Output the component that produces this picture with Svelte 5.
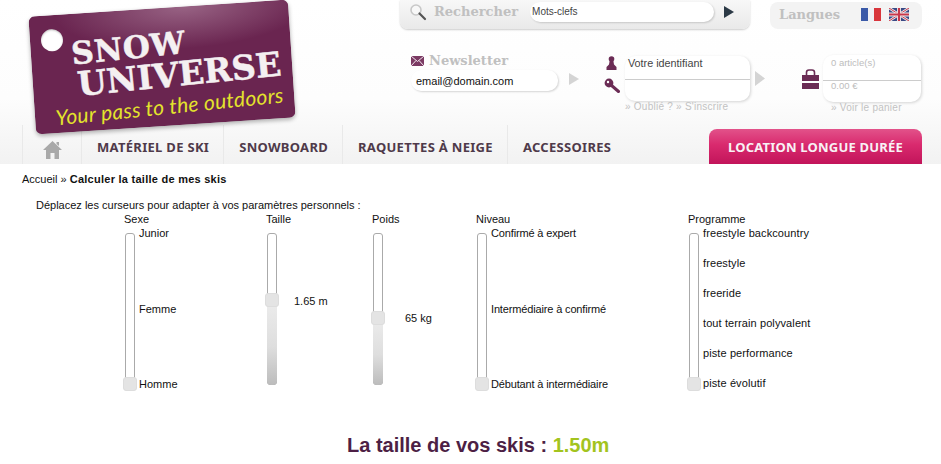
<script>
  const sliders = [
    { title: 'Sexe', width: 142, pos: 150, labels: ['Junior', 'Femme', 'Homme'], cls: 'three' },
    { title: 'Taille', width: 106, pos: 66, fill: true, value: '1.65 m', vtop: 68, vleft: 17 },
    { title: 'Poids', width: 104, pos: 84, fill: true, value: '65 kg', vtop: 85, vleft: 22 },
    { title: 'Niveau', width: 212, pos: 150, labels: ['Confirmé à expert', 'Intermédiaire à confirmé', 'Débutant à intermédiaire'], cls: 'three tight' },
    { title: 'Programme', width: 200, pos: 150, labels: ['freestyle backcountry', 'freestyle', 'freeride', 'tout terrain polyvalent', 'piste performance', 'piste évolutif'], cls: 'six' }
  ];
  const nav = ['MATÉRIEL DE SKI', 'SNOWBOARD', 'RAQUETTES À NEIGE', 'ACCESSOIRES'];
</script>

<div class="page">
  <header class="header">
    <div class="logo">
      <span class="hole"></span>
      <div class="brand">
        <div class="snow">SNOW</div>
        <div class="universe">UNIVERSE</div>
        <div class="tagline">Your pass to the outdoors</div>
      </div>
    </div>

    <div class="top">
      <div class="search">
        <svg class="magnifier" width="18" height="18" viewBox="0 0 18 18">
          <circle cx="7" cy="7" r="5" fill="#f8f8f8" stroke="#c8c8c8" stroke-width="1.6" />
          <path d="M10.5 10.5 L16 16" stroke="#555" stroke-width="2.2" stroke-linecap="round" />
        </svg>
        <span class="serif-title">Rechercher</span>
        <div class="pill search-input">Mots-clefs</div>
        <svg class="go" width="10" height="12" viewBox="0 0 10 12"><path d="M0 0 L10 6 L0 12Z" fill="#2c3a46" /></svg>
      </div>
      <div class="langs">
        <span class="serif-title">Langues</span>
        <svg class="flag fr" width="20" height="13" viewBox="0 0 20 13">
          <rect width="7" height="13" fill="#3b5aa8" /><rect x="7" width="6" height="13" fill="#f0f0f4" /><rect x="13" width="7" height="13" fill="#d8353c" />
        </svg>
        <svg class="flag" width="20" height="13" viewBox="0 0 20 13">
          <rect width="20" height="13" fill="#3a4a86" />
          <path d="M0 0 L20 13 M20 0 L0 13" stroke="#eee" stroke-width="2.6" />
          <path d="M0 0 L20 13 M20 0 L0 13" stroke="#c9384a" stroke-width="1" />
          <path d="M10 0 V13 M0 6.5 H20" stroke="#eee" stroke-width="4" />
          <path d="M10 0 V13 M0 6.5 H20" stroke="#c9384a" stroke-width="2.2" />
        </svg>
      </div>
    </div>

    <div class="tools">
      <div class="newsletter">
        <div class="news-title">
          <svg width="13" height="10" viewBox="0 0 13 10">
            <rect width="13" height="10" fill="#7b3a63" /><path d="M0 0 L6.5 5.5 L13 0 M0 10 L5 4.5 M13 10 L8 4.5" stroke="#f3e7ef" stroke-width="1" fill="none" />
          </svg>
          <span class="serif-title">Newsletter</span>
        </div>
        <div class="pill news-input">email@domain.com</div>
      </div>
      <svg class="arrow news-arrow" width="10" height="12" viewBox="0 0 10 12"><path d="M0 0 L10 6 L0 12Z" fill="#d4d4d4" /></svg>

      <div class="login">
        <div class="login-row">
          <div class="login-icons">
            <svg width="11" height="14" viewBox="0 0 11 14">
              <circle cx="5.5" cy="3" r="2.8" fill="#6b2c55" /><path d="M3.6 5 H7.4 L8 8.5 L10.5 11 V14 H0.5 V11 L3 8.5Z" fill="#6b2c55" />
            </svg>
            <svg width="16" height="15" viewBox="0 0 16 15">
              <circle cx="5" cy="5" r="4.4" fill="#6b2c55" /><circle cx="4" cy="4" r="1.2" fill="#fff" />
              <path d="M7 7 L14.5 13.5" stroke="#6b2c55" stroke-width="3" stroke-linecap="round" />
            </svg>
          </div>
          <div class="split-box login-box">
            <div class="cell login-cell">Votre identifiant</div>
            <div class="cell"></div>
          </div>
          <svg class="arrow" width="10" height="15" viewBox="0 0 10 15"><path d="M0 0 L10 7.5 L0 15Z" fill="#d4d4d4" /></svg>
        </div>
        <div class="muted-link login-links">» Oublié ? » S'inscrire</div>
      </div>

      <div class="cart">
        <div class="cart-row">
          <svg class="bag" width="17" height="20" viewBox="0 0 17 20">
            <path d="M4.5 6 V3.5 Q4.5 1 7 1 H10 Q12.5 1 12.5 3.5 V6" fill="none" stroke="#6b2c55" stroke-width="1.6" />
            <path d="M0 6 H17 V12 H0Z M0 14 H17 V20 H0Z" fill="#6b2c55" />
          </svg>
          <div class="split-box cart-box">
            <div class="cell cart-cell">0 article(s)</div>
            <div class="cell cart-cell">0.00 €</div>
          </div>
        </div>
        <div class="muted-link cart-link">» Voir le panier</div>
      </div>
    </div>

    <nav class="nav">
      <a class="home" href="#home" aria-label="Accueil">
        <svg width="19" height="18" viewBox="0 0 19 18">
          <path d="M9.5 0 L19 9 H16 V18 H11.5 V12 H7.5 V18 H3 V9 H0Z" fill="#a9a9a9" />
          <path d="M13.5 1 H16 V5 L13.5 3Z" fill="#a9a9a9" />
        </svg>
      </a>
      {#each nav as item, i}
        <a class="nav-item" class:last={i === nav.length - 1} href="#item">{item}</a>
      {/each}
      <a class="cta" href="#cta">LOCATION LONGUE DURÉE</a>
    </nav>
  </header>

  <main class="content">
    <p class="crumb">Accueil » <b>Calculer la taille de mes skis</b></p>
    <p class="intro">Déplacez les curseurs pour adapter à vos paramètres personnels :</p>

    <div class="sliders">
      {#each sliders as s}
        <div class="col" style="width:{s.width}px">
          <div class="col-title">{s.title}</div>
          <div class="col-body">
            <div class="track">
              {#if s.fill}<span class="fill" style="top:{s.pos}px"></span>{/if}
              <span class="handle" style="top:{s.pos}px"></span>
            </div>
            {#if s.labels}
              <div class="labels {s.cls}">
                {#each s.labels as l}<span>{l}</span>{/each}
              </div>
            {:else}
              <span class="value" style="margin-top:{s.vtop}px;margin-left:{s.vleft}px">{s.value}</span>
            {/if}
          </div>
        </div>
      {/each}
    </div>

    <h2 class="result">La taille de vos skis : <span>1.50m</span></h2>
  </main>
</div>

<style>
  :global(body) {
    margin: 0;
    background: #fff;
    font-family: "Liberation Sans", Arial, sans-serif;
    font-size: 11px;
    color: #111;
  }
  .page {
    width: 941px;
    height: 464px;
    overflow: hidden;
  }
  .header {
    position: relative;
    height: 164px;
    box-sizing: border-box;
    background: linear-gradient(to bottom, #fff 0, #fdfdfd 60%, #f2f2f2 100%);
    display: flex;
    flex-direction: column;
  }
  .logo {
    position: absolute;
    left: 32px;
    top: 8px;
    width: 260px;
    height: 118px;
    border-radius: 6px;
    transform: rotate(-3.8deg);
    background:
      radial-gradient(ellipse 130px 42px at 60% 0, rgba(190, 150, 175, .55), rgba(190, 150, 175, 0) 100%),
      #6a2550;
    box-shadow: 0 2px 4px rgba(0, 0, 0, .3);
    z-index: 2;
  }
  .hole {
    position: absolute;
    left: 11px;
    top: 14px;
    width: 22px;
    height: 22px;
    border-radius: 50%;
    background: #fff;
    box-shadow: inset 0 1px 2px rgba(0, 0, 0, .25);
  }
  .brand {
    padding: 26px 0 0 41px;
    transform: rotate(-2deg);
    transform-origin: 0 50%;
  }
  .snow, .universe {
    font-family: "DejaVu Serif", serif;
    font-weight: 700;
    color: #f4f0f1;
    white-space: nowrap;
    line-height: 1;
    -webkit-text-stroke: 0.5px #f4f0f1;
  }
  .snow {
    font-size: 31px;
    letter-spacing: 0.5px;
  }
  .universe {
    font-size: 33.5px;
    margin-left: 3px;
    margin-top: -1px;
  }
  .tagline {
    font-family: "Lato", sans-serif;
    font-style: italic;
    font-size: 21px;
    line-height: 1;
    letter-spacing: 0.3px;
    color: #e3e32c;
    white-space: nowrap;
    margin: 2px 0 0 -22px;
  }
  .top {
    height: 29px;
    display: flex;
    padding-left: 400px;
  }
  .search {
    width: 350px;
    height: 29px;
    box-sizing: border-box;
    display: flex;
    align-items: center;
    padding: 0 0 6px 9px;
    border-radius: 0 0 8px 8px;
    background: linear-gradient(to bottom, #f8f8f8, #e9e9e9);
    box-shadow: 0 1px 2px rgba(0, 0, 0, .2);
  }
  .magnifier {
    margin-right: 7px;
  }
  .serif-title {
    font-family: "DejaVu Serif", serif;
    font-weight: 700;
    font-size: 13px;
    color: #c0c0c0;
  }
  .pill {
    background: #fff;
    border-radius: 10px;
    box-shadow: 1px 1px 2px rgba(0, 0, 0, .16);
    display: flex;
    align-items: center;
    box-sizing: border-box;
  }
  .search-input {
    width: 184px;
    height: 20px;
    margin-left: 12px;
    padding-left: 2px;
    font-size: 10px;
    color: #444;
  }
  .go {
    margin-left: 10px;
  }
  .langs {
    width: 152px;
    height: 27px;
    margin: 2px 0 0 20px;
    box-sizing: border-box;
    background: #f3f3f3;
    border-radius: 8px;
    display: flex;
    align-items: center;
    padding: 0 0 2px 9px;
  }
  .flag {
    margin-left: 8px;
  }
  .flag.fr {
    margin-left: 21px;
  }
  .tools {
    height: 96px;
    position: relative;
    display: flex;
    padding-left: 411px;
    box-sizing: border-box;
  }
  .newsletter {
    width: 147px;
    padding-top: 22px;
  }
  .news-title {
    display: flex;
    align-items: center;
    gap: 5px;
    height: 19px;
  }
  .news-input {
    height: 21px;
    padding-left: 5px;
    font-size: 11px;
    color: #111;
  }
  .arrow {
    flex: none;
  }
  .news-arrow {
    margin: 44px 0 0 11px;
  }
  .login {
    margin-left: 24px;
    padding-top: 27px;
    width: 164px;
    flex: none;
  }
  .login-row {
    display: flex;
    align-items: center;
  }
  .login-icons {
    width: 22px;
    height: 37px;
    align-self: flex-start;
    display: flex;
    flex-direction: column;
    justify-content: space-between;
    align-items: center;
    padding-right: 5px;
    box-sizing: border-box;
  }
  .split-box {
    background: #fff;
    border-radius: 10px;
    box-shadow: 1px 1px 3px rgba(0, 0, 0, .16);
    display: flex;
    flex-direction: column;
    flex: none;
  }
  .login-box {
    width: 125px;
    height: 45px;
    margin-right: 5px;
  }
  .cell {
    flex: 1;
    padding-left: 3px;
    display: flex;
    align-items: center;
    color: #444;
    font-size: 10.8px;
  }
  .cell:first-child {
    border-bottom: 1px solid #ccc;
  }
  .login-cell {
    align-items: flex-start;
    padding-top: 1px;
  }
  .muted-link {
    color: #c2c2c2;
    font-size: 10px;
    letter-spacing: 0.25px;
  }
  .login-links {
    margin: 0 0 0 22px;
    line-height: 12px;
  }
  .cart {
    margin-left: 35px;
    padding-top: 26px;
  }
  .cart-row {
    display: flex;
    align-items: center;
  }
  .bag {
    margin-right: 4px;
    flex: none;
  }
  .cart-box {
    width: 98px;
    height: 47px;
  }
  .cart-cell {
    color: #bdbdbd;
    font-size: 9.5px;
    padding-left: 8px;
    align-items: flex-start;
    line-height: 10px;
  }
  .cart-cell:first-child {
    padding-top: 3px;
  }
  .cart-link {
    margin-left: 29px;
    line-height: 12px;
  }
  .nav {
    height: 39px;
    margin-left: 22px;
    display: flex;
    align-items: stretch;
    position: relative;
  }
  .home {
    width: 60px;
    border-left: 1px solid #e9e9e9;
    border-right: 1px solid #e9e9e9;
    box-sizing: border-box;
    display: flex;
    align-items: center;
    justify-content: center;
    padding: 10px 0 0 0;
  }
  .nav-item {
    display: flex;
    align-items: center;
    padding: 5px 14px 0 15px;
    border-right: 1px solid #e9e9e9;
    text-decoration: none;
    color: #4f3a4a;
    font-family: "Noto Sans", sans-serif;
    font-weight: 700;
    font-size: 13px;
    letter-spacing: 0.3px;
    white-space: nowrap;
  }
  .nav-item.last {
    border-right: 0;
  }
  .cta {
    margin: 4px 19px 0 auto;
    width: 213px;
    display: flex;
    align-items: center;
    justify-content: center;
    border-radius: 8px 8px 0 0;
    background: linear-gradient(to bottom, #e2528a 0, #d92a6e 45%, #c2145a 100%);
    color: #f8f2f5;
    font-family: "Noto Sans", sans-serif;
    font-weight: 700;
    font-size: 13px;
    letter-spacing: 0.2px;
    text-decoration: none;
    white-space: nowrap;
  }
  .content {
    padding-top: 9px;
  }
  .crumb {
    margin: 0 0 0 22px;
    line-height: 13px;
  }
  .crumb b {
    letter-spacing: 0.26px;
  }
  .intro {
    margin: 13px 0 0 36px;
    line-height: 13px;
  }
  .sliders {
    display: flex;
    margin: 1px 0 0 124px;
  }
  .col {
    flex: none;
  }
  .col-title {
    height: 13px;
    line-height: 13px;
  }
  .col-body {
    display: flex;
    height: 153px;
    margin-top: 7px;
  }
  .track {
    position: relative;
    width: 10px;
    height: 152px;
    box-sizing: border-box;
    margin-left: 1px;
    border: 1px solid #aaa;
    border-radius: 3px;
    background: #fff;
    flex: none;
  }
  .fill {
    position: absolute;
    left: -1px;
    right: -1px;
    bottom: -1px;
    border-radius: 0 0 4px 4px;
    background: linear-gradient(to bottom, #ececec 0, #dedede 55%, #bcbcbc 100%);
  }
  .handle {
    position: absolute;
    left: -3px;
    width: 14px;
    height: 14px;
    border-radius: 3px;
    background: #e4e4e4;
    border: 1px solid #ddd;
    box-sizing: border-box;
    transform: translateY(-7px);
  }
  .labels {
    display: flex;
    flex-direction: column;
    justify-content: space-between;
    height: 164px;
    margin: -6px 0 0 4px;
    line-height: 13px;
    white-space: nowrap;
  }
  .labels.tight {
    letter-spacing: -0.15px;
  }
  .labels.six {
    height: 163px;
    letter-spacing: 0.1px;
  }
  .value {
    line-height: 13px;
    white-space: nowrap;
    transform: translateY(-6px);
  }
  .result {
    margin: 47px 0 0 347px;
    font-size: 20px;
    line-height: 24px;
    font-weight: 700;
    color: #4d1f45;
    white-space: nowrap;
  }
  .result span {
    color: #a3c41e;
  }
</style>
